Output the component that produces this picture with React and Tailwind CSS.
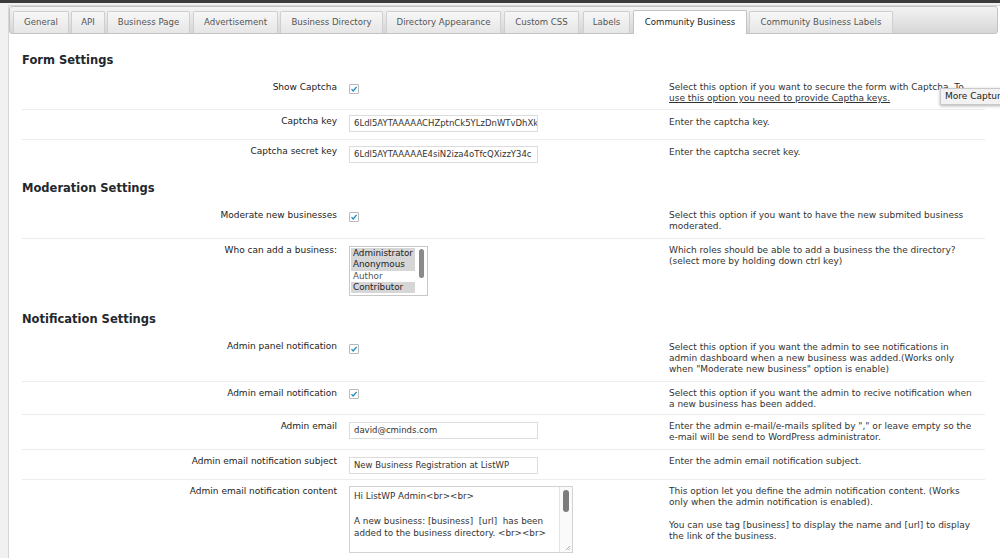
import React from "react";

const tabs = [
  { label: "General", w: "w-[56px]", ml: "ml-[3px]" },
  { label: "API", w: "w-[34px]", ml: "ml-[2px]" },
  { label: "Business Page", w: "w-[83px]", ml: "ml-[2px]" },
  { label: "Advertisement", w: "w-[85px]", ml: "ml-[3px]" },
  { label: "Business Directory", w: "w-[103px]", ml: "ml-[2px]" },
  { label: "Directory Appearance", w: "w-[115px]", ml: "ml-[3px]" },
  { label: "Custom CSS", w: "w-[75px]", ml: "ml-[3px]" },
  { label: "Labels", w: "w-[47px]", ml: "ml-[4px]" },
  { label: "Community Business", w: "w-[114px]", ml: "ml-[3px]", active: true },
  { label: "Community Business Labels", w: "w-[144px]", ml: "ml-[2px]" },
];

const Checkbox = () => (
  <div className="w-[10px] h-[10px] border border-[#b9b9b9] rounded-[1px] bg-white flex items-center justify-center">
    <svg width="8" height="8" viewBox="0 0 8 8">
      <path d="M1.5 4.3 L3.2 6 L6.6 1.8" fill="none" stroke="#1e8cbe" strokeWidth="1.3" />
    </svg>
  </div>
);

const TextInput = ({ value, w = "w-[189px]" }) => (
  <div className={`${w} h-[17px] border border-[#dcdcdc] bg-white px-[4px] text-[8.5px] leading-[15px] text-[#333] overflow-hidden whitespace-nowrap`}>
    {value}
  </div>
);

const Row = ({ label, h, field, fieldPt = "pt-[7px]", desc, border = true }) => (
  <div className={`flex ${h} ${border ? "border-b border-[#ececec]" : ""}`}>
    <div className="w-[315px] pt-[6px] text-right text-[#222] whitespace-nowrap">{label}</div>
    <div className={`ml-[12px] w-[320px] ${fieldPt}`}>{field}</div>
    <div className="w-[316px] pt-[6px] text-[#333] whitespace-nowrap">{desc}</div>
  </div>
);

const Heading = ({ children }) => (
  <div className="h-[32px] flex items-center text-[11.5px] font-bold text-[#23282d]">{children}</div>
);

export default function App() {
  return (
    <div
      className="relative w-[1000px] h-[558px] overflow-hidden bg-[#f1f1f1] text-[9px] leading-[11px]"
      style={{ fontFamily: '"DejaVu Sans", Verdana, sans-serif' }}
    >
      <div className="h-[3px] bg-[#3b3b3b]" />
      <div className="ml-[8px] mt-[2px] h-[600px] bg-white border-l border-t border-[#d6d6d6]">
        {/* tabs */}
        <div className="w-[989px] h-[28px] border border-[#c3c3c3] rounded-[3px] bg-gradient-to-b from-[#f3f3f3] to-[#d6d6d6] flex items-end">
          {tabs.map((t) => (
            <div
              key={t.label}
              className={`${t.w} ${t.ml} flex items-center justify-center whitespace-nowrap text-[8.6px] border border-b-0 rounded-t-[2px] ${
                t.active
                  ? "h-[24px] -mb-[1px] bg-white border-[#c3c3c3] text-[#222]"
                  : "h-[22px] bg-gradient-to-b from-[#f7f7f7] to-[#e6e6e6] border-[#cfcfcf] text-[#555]"
              }`}
            >
              {t.label}
            </div>
          ))}
        </div>

        <div className="pl-[13px] pt-[10px] w-[976px]">
          <Heading>Form Settings</Heading>
          <Row
            label="Show Captcha"
            h="h-[34px]"
            fieldPt="pt-[8px]"
            field={<Checkbox />}
            desc={
              <>
                <div>Select this option if you want to secure the form with Captcha. To</div>
                <div className="underline">use this option you need to provide Captha keys.</div>
              </>
            }
          />
          <Row
            label="Captcha key"
            h="h-[30px]"
            fieldPt="pt-[5px]"
            field={<TextInput value="6Ldl5AYTAAAAACHZptnCk5YLzDnWTvDhXk" />}
            desc={<div className="pt-[1px]">Enter the captcha key.</div>}
          />
          <Row
            label="Captcha secret key"
            h="h-[32px]"
            fieldPt="pt-[6px]"
            border={false}
            field={<TextInput value="6Ldl5AYTAAAAAE4siN2iza4oTfcQXizzY34c" />}
            desc={<div className="pt-[1px]">Enter the captcha secret key.</div>}
          />

          <Heading>Moderation Settings</Heading>
          <Row
            label="Moderate new businesses"
            h="h-[35px]"
            fieldPt="pt-[8px]"
            field={<Checkbox />}
            desc={
              <>
                <div>Select this option if you want to have the new submited business</div>
                <div>moderated.</div>
              </>
            }
          />
          <Row
            label="Who can add a business:"
            h="h-[64px]"
            fieldPt="pt-[7px]"
            border={false}
            field={
              <div className="relative w-[79px] h-[50px] border border-[#c8c8c8] bg-white text-[8.8px] leading-[11.3px] text-[#222] pt-[1px] pl-[1px] overflow-hidden whitespace-nowrap">
                <div className="w-[64px] bg-[#d6d6d6] pl-[2px]">Administrator</div>
                <div className="w-[64px] bg-[#d6d6d6] pl-[2px]">Anonymous</div>
                <div className="w-[64px] pl-[2px] text-[#555]">Author</div>
                <div className="w-[64px] bg-[#d6d6d6] pl-[2px]">Contributor</div>
                <div className="absolute right-[3px] top-[2px] w-[5px] h-[29px] rounded-full bg-[#8a8a8a]" />
              </div>
            }
            desc={
              <>
                <div>Which roles should be able to add a business the the directory?</div>
                <div>(select more by holding down ctrl key)</div>
              </>
            }
          />

          <Heading>Notification Settings</Heading>
          <Row
            label="Admin panel notification"
            h="h-[47px]"
            fieldPt="pt-[9px]"
            field={<Checkbox />}
            desc={
              <div className="pt-[1px]">
                <div>Select this option if you want the admin to see notifications in</div>
                <div>admin dashboard when a new business was added.(Works only</div>
                <div>when "Moderate new business" option is enable)</div>
              </div>
            }
          />
          <Row
            label="Admin email notification"
            h="h-[33px]"
            fieldPt="pt-[7px]"
            field={<Checkbox />}
            desc={
              <>
                <div>Select this option if you want the admin to recive notification when</div>
                <div>a new business has been added.</div>
              </>
            }
          />
          <Row
            label="Admin email"
            h="h-[35px]"
            fieldPt="pt-[7px]"
            field={<TextInput value="david@cminds.com" />}
            desc={
              <>
                <div>Enter the admin e-mail/e-mails splited by "," or leave empty so the</div>
                <div>e-mail will be send to WordPress administrator.</div>
              </>
            }
          />
          <Row
            label="Admin email notification subject"
            h="h-[30px]"
            fieldPt="pt-[7px]"
            field={<TextInput value="New Business Registration at ListWP" />}
            desc={<div>Enter the admin email notification subject.</div>}
          />
          <Row
            label="Admin email notification content"
            h="h-[90px]"
            fieldPt="pt-[6px]"
            border={false}
            field={
              <div className="relative w-[224px] h-[67px] border border-[#d2d2d2] bg-white text-[8.8px] text-[#333] pl-[4px] pt-[3px] overflow-hidden">
                <div className="leading-[12px]">Hi ListWP Admin&lt;br&gt;&lt;br&gt;</div>
                <div className="mt-[14px] leading-[11.5px] whitespace-nowrap">
                  <div>A new business: [business]&nbsp; [url]&nbsp; has been</div>
                  <div>added to the business directory. &lt;br&gt;&lt;br&gt;</div>
                </div>
                <div className="absolute right-0 top-0 bottom-0 w-[13px] border-l border-[#e4e4e4] bg-[#fafafa]">
                  <div className="mx-auto mt-[3px] w-[6px] h-[22px] rounded-full bg-[#7c7c7c]" />
                </div>
                <svg className="absolute right-[1px] bottom-[1px]" width="7" height="7" viewBox="0 0 7 7">
                  <path d="M6 2 L2 6 M6 4.5 L4.5 6" stroke="#999" strokeWidth="0.8" />
                </svg>
              </div>
            }
            desc={
              <>
                <div>This option let you define the admin notification content. (Works</div>
                <div>only when the admin notification is enabled).</div>
                <div className="mt-[12px]">You can use tag [business] to display the name and [url] to display</div>
                <div>the link of the business.</div>
              </>
            }
          />
        </div>
      </div>

      {/* tooltip, cut by the window edge as in the screenshot */}
      <div className="absolute left-[940px] top-[88px] h-[17px] pl-[4px] pr-[2px] bg-[#f2f2f2] border border-[#c9c9c9] shadow-[0_1px_3px_rgba(0,0,0,0.3)] text-[9px] leading-[15px] text-[#222] whitespace-nowrap">
        More Capture options
      </div>
    </div>
  );
}
